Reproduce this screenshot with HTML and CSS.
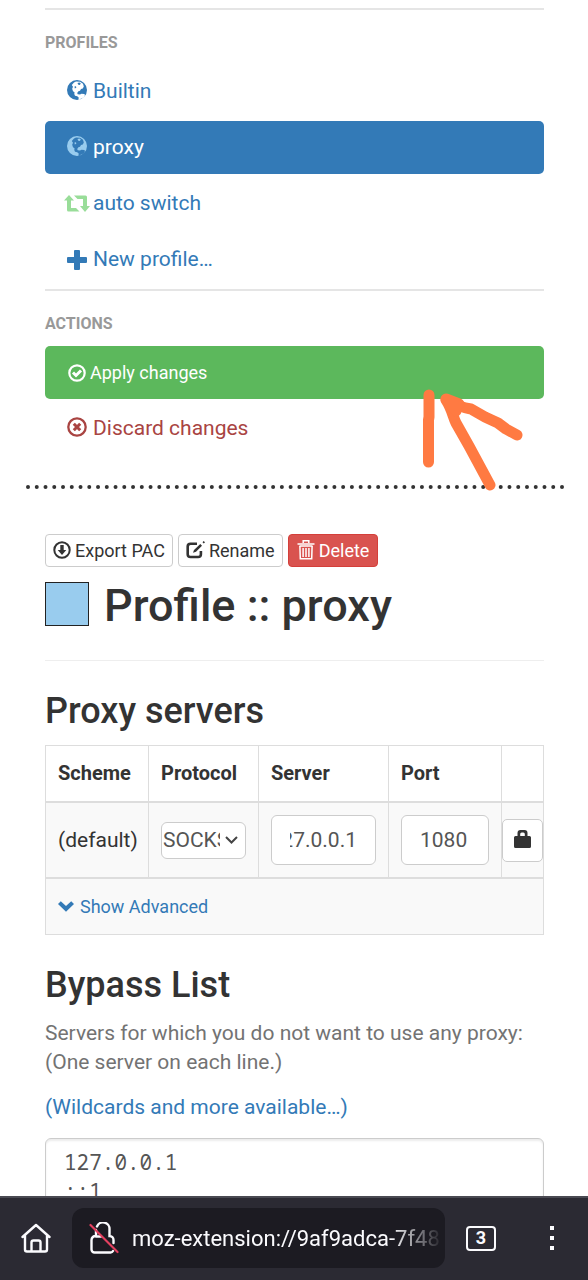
FILE: index.html
```html
<!DOCTYPE html>
<html lang="en">
<head>
<meta charset="utf-8">
<meta name="viewport" content="width=device-width, initial-scale=1">
<title>Profile :: proxy</title>
<link rel="stylesheet" href="styles.css">
</head>
<body>
<svg class="defs" aria-hidden="true">
  <symbol id="globe" viewBox="0 0 20 20">
    <path fill="currentColor" fill-rule="evenodd" d="M10 0a10 10 0 1 0 0 20a10 10 0 0 0 0-20zM7 2.500L9 1.500l4 .3 3 2 .8 2.700-1 2-1.800.5-1 1.800-1.600.4-1.200 1.800.5 1.200 2.300.3 1.500-.8 2.800.2.700 1-1 2.100-2 1.200-1 .2-1 1.200-1.500-.2.2-1.800-1.500-1.300-2.200-.5-.7-1.800.2-1.800-1.500-1-.8-2.400.8-2L4.800 5z"/>
    <path fill="currentColor" d="M10.500 3l2-.5 1.300 1-1 1.500-1.500-.3zM7.500 6.500l1.500-.2.3 1.500-1.500.6z"/>
  </symbol>
</svg>
<div class="screen">
  <div class="page">
    <nav class="sidebar" aria-label="Options">
      <h2 class="nav-title">PROFILES</h2>
      <a class="nav-item" href="#builtin"><span class="nav-icon"><svg width="20" height="20"><use href="#globe"/></svg></span>Builtin</a>
      <a class="nav-item nav-item-active" href="#proxy" aria-current="page"><span class="nav-icon nav-icon-sky"><svg width="20" height="20"><use href="#globe"/></svg></span>proxy</a>
      <a class="nav-item" href="#auto"><span class="nav-icon nav-icon-mint"><svg width="26" height="18" viewBox="0 0 26 18"><path fill="currentColor" d="M5 0L10 5.500H7V13h5l3.500 3.500H4.500A1.500 1.500 0 0 1 3 15V5.500H0zM10 .5H21.500A1.500 1.500 0 0 1 23 2v9h3l-5 6L16 11h3V4h-5.500z"/></svg></span>auto switch</a>
      <a class="nav-item" href="#new"><span class="nav-icon nav-icon-plus"><svg width="20" height="20" viewBox="0 0 20 20"><path fill="currentColor" d="M8 0h4a1 1 0 0 1 1 1v6h6a1 1 0 0 1 1 1v4a1 1 0 0 1-1 1h-6v6a1 1 0 0 1-1 1H8a1 1 0 0 1-1-1v-6H1a1 1 0 0 1-1-1V8a1 1 0 0 1 1-1h6V1a1 1 0 0 1 1-1z"/></svg></span>New profile…</a>
      <h2 class="nav-title">ACTIONS</h2>
      <button class="nav-item nav-apply" type="button"><svg width="18" height="18" viewBox="0 0 18 18" fill="none" stroke="currentColor"><circle cx="9" cy="9" r="7.700" stroke-width="2.200"/><path stroke-width="3" d="M5 8.500l3 3 5-5"/></svg>Apply changes</button>
      <button class="nav-item nav-discard" type="button"><span class="nav-icon"><svg width="20" height="20" viewBox="0 0 20 20" fill="none" stroke="currentColor"><circle cx="10" cy="10" r="8.700" stroke-width="2.300"/><path stroke-width="3" d="M6.800 6.800l6.400 6.400M13.200 6.800l-6.400 6.400"/></svg></span>Discard changes</button>
      <svg class="pointer" width="104" height="106" viewBox="0 0 104 106" fill="none" stroke="#ff7a42" stroke-linecap="round" stroke-linejoin="round" stroke-width="11" aria-hidden="true"><path d="M8 8v22l-.500 3v42M69 98L48 59L35 36C32 30 31 22 25 13M25 13Q38 20 50 22L64 30L77 36L85 42L96 48"/><path d="M25 12l13 5M28 14l7 10"/></svg>
    </nav>
    <svg class="dots" aria-hidden="true"><line x1="2" y1="3" x2="100%" y2="3" pathLength="61" stroke="#333" stroke-width="4" stroke-linecap="round" stroke-dasharray="0 1"/></svg>
    <main class="content">
      <div class="toolbar">
        <button class="btn" type="button"><svg width="18" height="18" viewBox="0 0 18 18"><circle cx="9" cy="9" r="7.700" fill="none" stroke="currentColor" stroke-width="2"/><path fill="currentColor" d="M7.300 4h3.400v5h2.600L9 14 4.700 9h2.600z"/></svg>Export PAC</button>
        <button class="btn" type="button"><svg width="19" height="18" viewBox="0 0 19 18"><path fill="none" stroke="currentColor" stroke-width="2.600" d="M11 2.800H4.500A2.800 2.800 0 0 0 1.700 5.600v7.600A2.800 2.800 0 0 0 4.500 16h7.600a2.800 2.800 0 0 0 2.800-2.800V10"/><path fill="currentColor" d="M14.300 3l1.700 1.700-6 6L7 11.700 8 9zM16.500 1.200L17.700 0 19 1.300 17.800 2.500z"/></svg>Rename</button>
        <button class="btn btn-danger" type="button"><svg width="18" height="20" viewBox="0 0 17 20" fill="none" stroke="currentColor"><path stroke-width="1.500" d="M5.700 3V.8h5.600V3M0 4h17M2 6h13"/><path stroke-width="1.500" d="M2.400 6l.4 12.800h11.400L14.600 6M5.600 8v9M8.500 8v9M11.400 8v9"/></svg>Delete</button>
      </div>
      <h1 class="title"><label class="swatch"><input type="color" value="#99ccee" aria-label="Profile color"></label>Profile :: proxy</h1>
      <h2 class="heading">Proxy servers</h2>
      <table class="servers">
        <colgroup><col class="col-scheme"><col class="col-protocol"><col><col class="col-port"><col class="col-auth"></colgroup>
        <thead><tr><th>Scheme</th><th>Protocol</th><th>Server</th><th>Port</th><th></th></tr></thead>
        <tbody>
          <tr>
            <td>(default)</td>
            <td><span class="select-box"><select class="protocol" aria-label="Protocol"><option>SOCKS5</option><option>HTTP</option></select><svg width="13" height="8" viewBox="0 0 13 8" fill="none" stroke="#444" stroke-width="2"><path d="M1 1l5.500 5.500L12 1"/></svg></span></td>
            <td><input class="field" type="text" dir="rtl" value="127.0.0.1" aria-label="Server"></td>
            <td><input class="field" type="text" value="1080" aria-label="Port"></td>
            <td class="auth"><button class="lock" type="button" aria-label="Authentication"><svg width="17" height="18" viewBox="0 0 17 18"><path fill="currentColor" fill-rule="evenodd" d="M3.500 6V3A3 3 0 0 1 6.500 0h4a3 3 0 0 1 3 3V6H15.500A1.500 1.500 0 0 1 17 7.500V16.500A1.500 1.500 0 0 1 15.500 18h-14A1.500 1.500 0 0 1 0 16.500v-9A1.500 1.500 0 0 1 1.500 6zM6.200 6h4.600V4a1.500 1.500 0 0 0-1.500-1.500H7.700A1.500 1.500 0 0 0 6.200 4z"/></svg></button></td>
          </tr>
        </tbody>
        <tfoot><tr><td colspan="5"><a class="advanced" href="#advanced"><svg width="16" height="11" viewBox="0 0 16 11"><path fill="currentColor" d="M0 3l2.800-2.800L8 5 13.200.2 16 3l-8 7.800z"/></svg>Show Advanced</a></td></tr></tfoot>
      </table>
      <h2 class="heading"><label for="bypass">Bypass List</label></h2>
      <p class="help">Servers for which you do not want to use any proxy: (One server on each line.)</p>
      <p class="more"><a href="#wildcards">(Wildcards and more available…)</a></p>
      <textarea class="bypass" id="bypass" rows="10" spellcheck="false">127.0.0.1
::1
localhost</textarea>
    </main>
  </div>
  <footer class="browser-bar">
    <button class="bar-btn" type="button" aria-label="Home"><svg width="30" height="30" viewBox="0 0 30 30" fill="none" stroke="currentColor" stroke-width="2.400" stroke-linejoin="round" stroke-linecap="round"><path d="M1.500 14L15 2l13.500 12M4 12.500v14A2 2 0 0 0 6 28.500h18a2 2 0 0 0 2-2v-14M10.500 28v-8.500a2 2 0 0 1 2-2h5a2 2 0 0 1 2 2V28"/></svg></button>
    <div class="address">
      <svg width="30" height="32" viewBox="0 0 30 32" fill="none" stroke-linecap="round"><path stroke="#fbfbfe" stroke-width="2.400" d="M8 4.500A6.500 6.500 0 0 1 20.500 7.500V14a4 4 0 0 1 4 4v3M7 8v6a4 4 0 0 0-4.500 4v9.500a3 3 0 0 0 3 3h16a3 3 0 0 0 2.500-1.500M7 14.500h5"/><path stroke="#e4405f" stroke-width="2.200" d="M1.500 3L28.500 30"/></svg>
      <span class="url">moz-extension://9af9adca-7f48</span>
    </div>
    <button class="tabs" type="button" aria-label="Tabs">3</button>
    <button class="bar-btn" type="button" aria-label="Menu"><svg width="4" height="24" viewBox="0 0 4 24" fill="currentColor"><path d="M0 0h4v4H0zM0 10h4v4H0zM0 20h4v4H0z"/></svg></button>
  </footer>
</div>
</body>
</html>
```
FILE: styles.css
```css
* { box-sizing: border-box; }
body {
  margin: 0;
  background: #fff;
  color: #333;
  font: 21px/29px Roboto, "Liberation Sans", sans-serif;
}
a { color: #337ab7; text-decoration: none; }
button, input, select, textarea { font: inherit; color: inherit; margin: 0; }
svg { display: block; flex: none; }
.defs { position: absolute; width: 0; height: 0; }
.screen { height: 100vh; display: flex; flex-direction: column; }
.page { flex: 1; min-height: 0; overflow: hidden; padding: 8px 26px 0; }

.sidebar { position: relative; display: flex; flex-direction: column; gap: 3px; padding: 0 18px 0 19px; }
.nav-title {
  margin: 0;
  padding: 22px 0 8px;
  border-top: 2px solid #e5e5e5;
  color: #999;
  font-size: 16px;
  line-height: 22px;
  font-weight: 700;
}
.nav-item {
  display: flex;
  align-items: center;
  gap: 3px;
  padding: 12px 19px;
  border: 0;
  border-radius: 5px;
  background: none;
  text-align: left;
}
.nav-icon { display: flex; justify-content: center; width: 26px; padding-bottom: 3px; }
.nav-icon-sky { color: #99ccee; }
.nav-icon-mint { padding: 0; color: #99dd99; }
.nav-icon-plus { padding: 0; }
.nav-item-active { background: #337ab7; color: #fff; }
.nav-apply {
  gap: 4px;
  padding: 12px 23px;
  background: #5cb85c;
  color: #fff;
  font-size: 18px;
}
.nav-discard { color: #a94442; }
.pointer { position: absolute; right: 37px; bottom: -38px; z-index: 1; }
.dots { width: 100%; height: 6px; margin-top: 29px; overflow: visible; }

.content { padding: 44px 18px 0 19px; }
.toolbar { display: flex; gap: 5px; }
.btn {
  display: flex;
  align-items: center;
  gap: 4px;
  padding: 1px 7px;
  border: 1px solid #ccc;
  border-radius: 4px;
  background: #fff;
  font-size: 18px;
}
.btn svg { margin-bottom: 2px; }
.btn-danger { padding: 1px 8px; background: #d9534f; border-color: #d43f3a; color: #fff; }
.title {
  display: flex;
  align-items: center;
  gap: 15px;
  margin: 12px 0 0;
  padding-bottom: 27px;
  border-bottom: 1px solid #eee;
  font-size: 45px;
  line-height: 54px;
  font-weight: 500;
}
.swatch { display: flex; padding-bottom: 4px; }
.swatch input {
  appearance: none;
  width: 44px;
  height: 44px;
  padding: 0;
  border: 1px solid #222;
  background: #99ccee;
}
.swatch input::-webkit-color-swatch-wrapper { padding: 0; }
.swatch input::-webkit-color-swatch { border: 0; border-radius: 0; }
.heading { margin: 0; padding: 30px 0 14px; font-size: 36px; line-height: 40px; font-weight: 500; }

.servers { width: 100%; table-layout: fixed; border-collapse: collapse; }
.col-scheme { width: 103px; }
.col-protocol { width: 110px; }
.col-port { width: 113px; }
.col-auth { width: 42px; }
.servers th, .servers td {
  padding: 12px;
  border: 1px solid #ddd;
  text-align: left;
  white-space: nowrap;
}
.servers th { padding: 13px 12px; font-size: 20px; font-weight: 700; border-bottom-width: 2px; }
.servers td { background: #f9f9f9; }
.servers tfoot td { padding: 13px 12px; border-top-width: 2px; }
.servers .auth { padding: 0; }
.select-box {
  display: flex;
  align-items: center;
  gap: 5px;
  height: 37px;
  padding: 0 7px 0 1px;
  border: 1px solid #ccc;
  border-radius: 6px;
  background: #fff;
}
.protocol {
  appearance: none;
  flex: 1;
  min-width: 0;
  padding: 0;
  border: 0;
  background: none;
  color: #555;
  overflow: hidden;
  text-overflow: clip;
}
.field {
  display: block;
  width: 100%;
  height: 50px;
  padding: 0 18px;
  border: 1px solid #ccc;
  border-radius: 6px;
  background: #fff;
  color: #555;
}
.lock {
  display: flex;
  align-items: center;
  justify-content: center;
  width: 100%;
  height: 43px;
  padding: 0 0 2px;
  border: 1px solid #ccc;
  border-radius: 5px;
  background: #fff;
}
.advanced { display: inline-flex; align-items: center; gap: 6px; font-size: 18px; vertical-align: top; }
.help { margin: 0; color: #737373; }
.more { margin: 16px 0; }
.bypass {
  display: block;
  width: 100%;
  padding: 9px 18px;
  border: 1px solid #ccc;
  border-radius: 6px;
  box-shadow: inset 0 2px 2px rgba(0, 0, 0, 0.075);
  color: #555;
  font-family: "Noto Sans Mono", "DejaVu Sans Mono", monospace;
  resize: none;
}

.browser-bar {
  display: flex;
  align-items: center;
  padding: 10px 0 12px;
  border-top: 2px solid #4a4a52;
  background: #2b2a33;
  color: #fbfbfe;
}
.bar-btn { display: flex; justify-content: center; width: 72px; padding: 0; border: 0; background: none; }
.address {
  flex: 1;
  min-width: 0;
  display: flex;
  align-items: center;
  gap: 13px;
  height: 60px;
  padding: 0 2px 0 17px;
  border-radius: 12px;
  background: #1c1b22;
}
.url {
  flex: 1;
  overflow: hidden;
  white-space: nowrap;
  font-size: 22px;
  mask-image: linear-gradient(to left, transparent, #000 52px);
}
.tabs {
  width: 30px;
  height: 25px;
  margin: 0 20px 0 21px;
  padding: 0;
  border: 2px solid #fbfbfe;
  border-radius: 4px;
  background: none;
  font-size: 18px;
  line-height: 20px;
  font-weight: 700;
}
```
